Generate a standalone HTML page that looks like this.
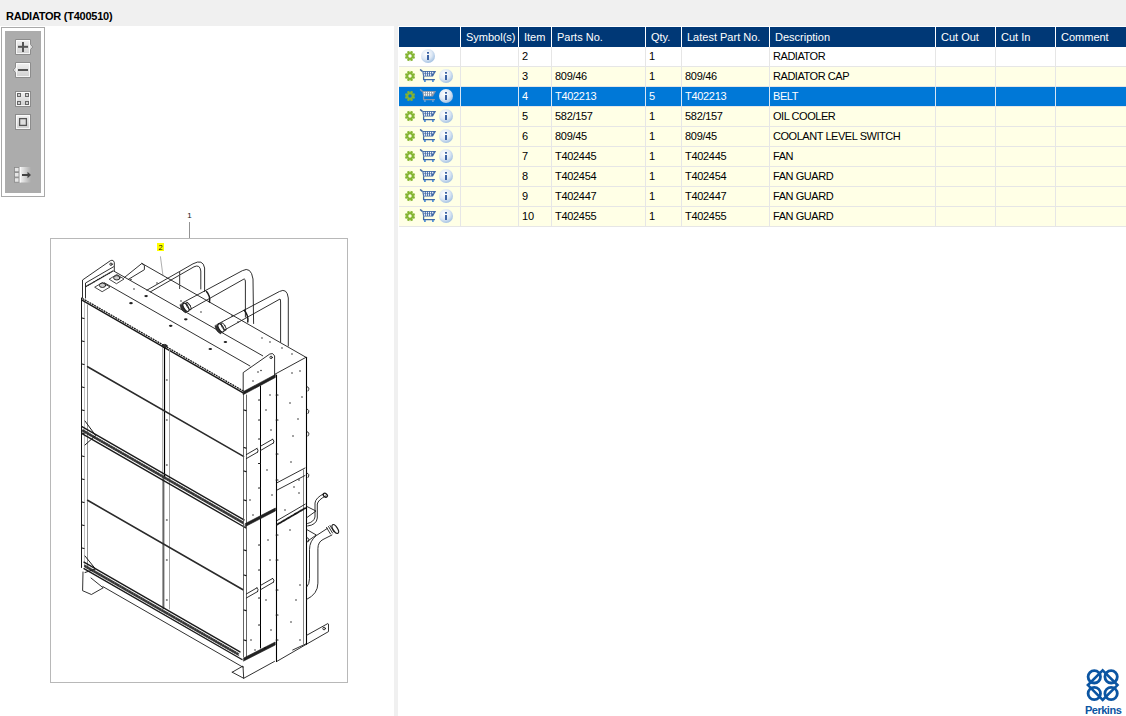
<!DOCTYPE html>
<html><head><meta charset="utf-8">
<style>
*{margin:0;padding:0;box-sizing:border-box}
html,body{width:1126px;height:716px;overflow:hidden;background:#fff;font-family:"Liberation Sans",sans-serif;position:relative}
.a{position:absolute}
#top{left:0;top:0;width:1126px;height:26px;background:#f0f0f0}
#title{left:6px;top:10px;font-weight:bold;font-size:11px;line-height:12px;color:#000;letter-spacing:-0.25px;white-space:nowrap}
#divider{left:394px;top:26px;width:4px;height:690px;background:#f0f0f0}
#tb{left:1px;top:27px;width:44px;height:170px;border:1px solid #a9a9a9;background:#fff}
#tbin{left:3px;top:3px;width:36px;height:162px;background:#acacac}
.hd{top:27px;height:20px;background:#003876;color:#fff;font-size:11px;white-space:nowrap;overflow:hidden}
.hd span{position:absolute;top:4px;line-height:13px}
.cell{font-size:11px;line-height:13px;white-space:nowrap}

</style></head><body>
<svg width="0" height="0" style="position:absolute">
<defs>
<radialGradient id="ig" cx="0.4" cy="0.35" r="0.7">
<stop offset="0" stop-color="#ffffff"/><stop offset="0.55" stop-color="#dfe9f5"/><stop offset="1" stop-color="#9dbde0"/>
</radialGradient>
<g id="gear">
<path fill="#83b431" fill-rule="evenodd" d="M6.34 2.32 L6.74 0.85 L9.12 1.84 L8.36 3.15 L8.85 3.64 L10.16 2.88 L11.15 5.26 L9.68 5.66 L9.68 6.34 L11.15 6.74 L10.16 9.12 L8.85 8.36 L8.36 8.85 L9.12 10.16 L6.74 11.15 L6.34 9.68 L5.66 9.68 L5.26 11.15 L2.88 10.16 L3.64 8.85 L3.15 8.36 L1.84 9.12 L0.85 6.74 L2.32 6.34 L2.32 5.66 L0.85 5.26 L1.84 2.88 L3.15 3.64 L3.64 3.15 L2.88 1.84 L5.26 0.85 L5.66 2.32 Z M6 4.3 A1.7 1.7 0 1 0 6 7.7 A1.7 1.7 0 1 0 6 4.3 Z"/>
</g>
<g id="info">
<circle cx="8" cy="8" r="7" fill="url(#ig)"/>
<rect x="7" y="4" width="2" height="1.7" fill="#3a62a4"/>
<rect x="7" y="7" width="2" height="5" fill="#3a62a4"/>
</g>
<g id="cart">
<path d="M1.1 0.5 L3.4 2.3" stroke="#4169a6" stroke-width="1.5" fill="none"/>
<path d="M3.2 2.0 L17.1 2.0 L14.0 7.6 L4.1 7.6 Z" fill="#4169a6"/>
<g fill="#eef3fa"><rect x="4.6" y="2.9" width="1.2" height="1.6"/><rect x="6.8" y="2.9" width="1.2" height="1.6"/><rect x="8.9" y="2.9" width="1.2" height="1.6"/><rect x="11" y="2.9" width="1.2" height="1.6"/><rect x="13.1" y="2.9" width="1.2" height="1.6"/>
<rect x="4.9" y="5.1" width="1.2" height="1.6"/><rect x="6.8" y="5.1" width="1.2" height="1.6"/><rect x="8.9" y="5.1" width="1.2" height="1.6"/><rect x="11" y="5.1" width="1.2" height="1.6"/></g>
<path d="M4.6 7.3 L4.6 10.6 L15.9 10.6" stroke="#4169a6" stroke-width="1.3" fill="none"/>
<rect x="5" y="11.2" width="1.8" height="1.6" fill="#2f7ad0"/><rect x="13" y="11.2" width="1.8" height="1.6" fill="#2f7ad0"/>
</g>
<g id="cartsel">
<path d="M1.1 0.5 L3.4 2.3" stroke="#8a96a8" stroke-width="1.5" fill="none"/>
<path d="M3.2 2.0 L17.1 2.0 L14.0 7.6 L4.1 7.6 Z" fill="#8a96a8"/>
<g fill="#ffffff"><rect x="4.6" y="2.9" width="1.2" height="1.6"/><rect x="6.8" y="2.9" width="1.2" height="1.6"/><rect x="8.9" y="2.9" width="1.2" height="1.6"/><rect x="11" y="2.9" width="1.2" height="1.6"/><rect x="13.1" y="2.9" width="1.2" height="1.6"/>
<rect x="4.9" y="5.1" width="1.2" height="1.6"/><rect x="6.8" y="5.1" width="1.2" height="1.6"/><rect x="8.9" y="5.1" width="1.2" height="1.6"/><rect x="11" y="5.1" width="1.2" height="1.6"/></g>
<path d="M4.6 7.3 L4.6 10.6 L15.9 10.6" stroke="#8a96a8" stroke-width="1.3" fill="none"/>
<rect x="5" y="11.2" width="1.8" height="1.6" fill="#6fa6dc"/><rect x="13" y="11.2" width="1.8" height="1.6" fill="#6fa6dc"/>
</g>
</defs>
</svg>
<div class="a" id="top"></div>
<div class="a" id="title">RADIATOR (T400510)</div>
<div class="a" id="divider"></div>
<div class="a" id="tb"><div class="a" id="tbin"></div></div>
<svg class="a" style="left:0;top:0" width="50" height="200">
<defs>
<linearGradient id="bg1" x1="0" y1="0" x2="0" y2="1"><stop offset="0" stop-color="#f2f2f2"/><stop offset="1" stop-color="#cfcfcf"/></linearGradient>
<linearGradient id="bg2" x1="0" y1="0" x2="1" y2="0"><stop offset="0" stop-color="#f4f4f4"/><stop offset="1" stop-color="#acacac"/></linearGradient>
</defs>
<g stroke="#8c8c8c" stroke-width="1" fill="url(#bg1)">
<path d="M15.5 39.5 H30.5 V44.5 L32.8 47 L30.5 49.5 V54.5 H15.5 Z"/>
<path d="M15.5 62.5 H30.5 V77.5 H15.5 V72.5 L13.2 70 L15.5 67.5 Z"/>
<rect x="15.5" y="91.5" width="15" height="15"/>
<rect x="15.5" y="114.5" width="15" height="15"/>
</g>
<g fill="none" stroke="#ffffff" stroke-width="1" opacity="0.8">
<rect x="16.5" y="40.5" width="13" height="13"/>
<rect x="16.5" y="63.5" width="13" height="13"/>
<rect x="16.5" y="92.5" width="13" height="13"/>
<rect x="16.5" y="115.5" width="13" height="13"/>
</g>
<g fill="#555">
<rect x="18" y="45.8" width="10" height="2"/><rect x="22" y="42" width="2" height="10"/>
<rect x="18" y="69" width="10" height="2"/>
</g>
<g fill="#cfcfcf" stroke="#666" stroke-width="1">
<rect x="17.5" y="93.5" width="3" height="3"/><rect x="25.5" y="93.5" width="3" height="3"/>
<rect x="17.5" y="101.5" width="3" height="3"/><rect x="25.5" y="101.5" width="3" height="3"/>
</g>
<rect x="19.6" y="118.6" width="6.8" height="6.8" fill="#dedede" stroke="#555" stroke-width="1.3"/>
<rect x="20" y="167" width="11" height="15.5" fill="url(#bg2)"/>
<g fill="#e6e6e6" stroke="#888" stroke-width="0.8">
<rect x="14.4" y="167.4" width="4.6" height="4.4"/><rect x="14.4" y="172.6" width="4.6" height="4.4"/><rect x="14.4" y="177.8" width="4.6" height="4.4"/>
</g>
<rect x="19.6" y="167" width="1" height="15.5" fill="#fff"/>
<rect x="22" y="174" width="6.5" height="2" fill="#444"/>
<path d="M27.5 171.8 L31 175 L27.5 178.2 Z" fill="#444"/>
</svg>
<div class="a hd" style="left:399px;width:61px"></div>
<div class="a hd" style="left:461px;width:57px"><span style="left:5px">Symbol(s)</span></div>
<div class="a hd" style="left:519px;width:32px"><span style="left:5px">Item</span></div>
<div class="a hd" style="left:552px;width:93px"><span style="left:5px">Parts No.</span></div>
<div class="a hd" style="left:646px;width:35px"><span style="left:5px">Qty.</span></div>
<div class="a hd" style="left:682px;width:87px"><span style="left:5px">Latest Part No.</span></div>
<div class="a hd" style="left:770px;width:165px"><span style="left:5px">Description</span></div>
<div class="a hd" style="left:936px;width:59px"><span style="left:5px">Cut Out</span></div>
<div class="a hd" style="left:996px;width:59px"><span style="left:5px">Cut In</span></div>
<div class="a hd" style="left:1056px;width:70px"><span style="left:5px">Comment</span></div>

<svg class="a" style="left:1080px;top:660.6px" width="46" height="56">
<g fill="none" stroke="#0b55a2" stroke-width="2.8">
<circle cx="14.3" cy="15.8" r="6.2"/><circle cx="31.1" cy="15.8" r="6.2"/>
<circle cx="14.3" cy="32.5" r="6.2"/><circle cx="31.1" cy="32.5" r="6.2"/>
<path d="M22.7 9.3 L37.5 24.1 L22.7 38.9 L7.9 24.1 Z" stroke-width="2.6"/>
</g>
</svg>
<div class="a" style="left:1085px;top:703.6px;font-size:11px;line-height:12px;font-weight:bold;color:#0b55a2;letter-spacing:-0.5px;white-space:nowrap">Perkins</div>
<div class="a" style="left:399px;top:47px;width:727px;height:19px;background:#fff"></div>
<div class="a" style="left:399px;top:66px;width:727px;height:1px;background:#e6e6e6"></div>
<div class="a cell" style="left:522px;top:50px;color:#000;letter-spacing:0">2</div>
<div class="a cell" style="left:649px;top:50px;color:#000;letter-spacing:0">1</div>
<div class="a cell" style="left:773px;top:50px;color:#000;letter-spacing:-0.45px">RADIATOR</div>
<svg class="a" style="left:404px;top:50px" width="12" height="12"><use href="#gear"/></svg>
<svg class="a" style="left:420px;top:48px" width="16" height="16"><use href="#info"/></svg>
<div class="a" style="left:399px;top:67px;width:727px;height:19px;background:#ffffe6"></div>
<div class="a" style="left:399px;top:86px;width:727px;height:1px;background:#e6e6e6"></div>
<div class="a cell" style="left:522px;top:70px;color:#000;letter-spacing:0">3</div>
<div class="a cell" style="left:555px;top:70px;color:#000;letter-spacing:-0.3px">809/46</div>
<div class="a cell" style="left:649px;top:70px;color:#000;letter-spacing:0">1</div>
<div class="a cell" style="left:685px;top:70px;color:#000;letter-spacing:-0.3px">809/46</div>
<div class="a cell" style="left:773px;top:70px;color:#000;letter-spacing:-0.45px">RADIATOR CAP</div>
<svg class="a" style="left:404px;top:70px" width="12" height="12"><use href="#gear"/></svg>
<svg class="a" style="left:419px;top:69px" width="18" height="15"><use href="#cart"/></svg>
<svg class="a" style="left:438px;top:68px" width="16" height="16"><use href="#info"/></svg>
<div class="a" style="left:399px;top:87px;width:727px;height:19px;background:#0078d7"></div>
<div class="a" style="left:399px;top:106px;width:727px;height:1px;background:#e6e6e6"></div>
<div class="a cell" style="left:522px;top:90px;color:#fff;letter-spacing:0">4</div>
<div class="a cell" style="left:555px;top:90px;color:#fff;letter-spacing:-0.3px">T402213</div>
<div class="a cell" style="left:649px;top:90px;color:#fff;letter-spacing:0">5</div>
<div class="a cell" style="left:685px;top:90px;color:#fff;letter-spacing:-0.3px">T402213</div>
<div class="a cell" style="left:773px;top:90px;color:#fff;letter-spacing:-0.45px">BELT</div>
<svg class="a" style="left:404px;top:90px" width="12" height="12"><use href="#gear"/></svg>
<svg class="a" style="left:419px;top:89px" width="18" height="15"><use href="#cartsel"/></svg>
<svg class="a" style="left:438px;top:88px" width="16" height="16"><use href="#info"/></svg>
<div class="a" style="left:399px;top:107px;width:727px;height:19px;background:#ffffe6"></div>
<div class="a" style="left:399px;top:126px;width:727px;height:1px;background:#e6e6e6"></div>
<div class="a cell" style="left:522px;top:110px;color:#000;letter-spacing:0">5</div>
<div class="a cell" style="left:555px;top:110px;color:#000;letter-spacing:-0.3px">582/157</div>
<div class="a cell" style="left:649px;top:110px;color:#000;letter-spacing:0">1</div>
<div class="a cell" style="left:685px;top:110px;color:#000;letter-spacing:-0.3px">582/157</div>
<div class="a cell" style="left:773px;top:110px;color:#000;letter-spacing:-0.45px">OIL COOLER</div>
<svg class="a" style="left:404px;top:110px" width="12" height="12"><use href="#gear"/></svg>
<svg class="a" style="left:419px;top:109px" width="18" height="15"><use href="#cart"/></svg>
<svg class="a" style="left:438px;top:108px" width="16" height="16"><use href="#info"/></svg>
<div class="a" style="left:399px;top:127px;width:727px;height:19px;background:#ffffe6"></div>
<div class="a" style="left:399px;top:146px;width:727px;height:1px;background:#e6e6e6"></div>
<div class="a cell" style="left:522px;top:130px;color:#000;letter-spacing:0">6</div>
<div class="a cell" style="left:555px;top:130px;color:#000;letter-spacing:-0.3px">809/45</div>
<div class="a cell" style="left:649px;top:130px;color:#000;letter-spacing:0">1</div>
<div class="a cell" style="left:685px;top:130px;color:#000;letter-spacing:-0.3px">809/45</div>
<div class="a cell" style="left:773px;top:130px;color:#000;letter-spacing:-0.45px">COOLANT LEVEL SWITCH</div>
<svg class="a" style="left:404px;top:130px" width="12" height="12"><use href="#gear"/></svg>
<svg class="a" style="left:419px;top:129px" width="18" height="15"><use href="#cart"/></svg>
<svg class="a" style="left:438px;top:128px" width="16" height="16"><use href="#info"/></svg>
<div class="a" style="left:399px;top:147px;width:727px;height:19px;background:#ffffe6"></div>
<div class="a" style="left:399px;top:166px;width:727px;height:1px;background:#e6e6e6"></div>
<div class="a cell" style="left:522px;top:150px;color:#000;letter-spacing:0">7</div>
<div class="a cell" style="left:555px;top:150px;color:#000;letter-spacing:-0.3px">T402445</div>
<div class="a cell" style="left:649px;top:150px;color:#000;letter-spacing:0">1</div>
<div class="a cell" style="left:685px;top:150px;color:#000;letter-spacing:-0.3px">T402445</div>
<div class="a cell" style="left:773px;top:150px;color:#000;letter-spacing:-0.45px">FAN</div>
<svg class="a" style="left:404px;top:150px" width="12" height="12"><use href="#gear"/></svg>
<svg class="a" style="left:419px;top:149px" width="18" height="15"><use href="#cart"/></svg>
<svg class="a" style="left:438px;top:148px" width="16" height="16"><use href="#info"/></svg>
<div class="a" style="left:399px;top:167px;width:727px;height:19px;background:#ffffe6"></div>
<div class="a" style="left:399px;top:186px;width:727px;height:1px;background:#e6e6e6"></div>
<div class="a cell" style="left:522px;top:170px;color:#000;letter-spacing:0">8</div>
<div class="a cell" style="left:555px;top:170px;color:#000;letter-spacing:-0.3px">T402454</div>
<div class="a cell" style="left:649px;top:170px;color:#000;letter-spacing:0">1</div>
<div class="a cell" style="left:685px;top:170px;color:#000;letter-spacing:-0.3px">T402454</div>
<div class="a cell" style="left:773px;top:170px;color:#000;letter-spacing:-0.45px">FAN GUARD</div>
<svg class="a" style="left:404px;top:170px" width="12" height="12"><use href="#gear"/></svg>
<svg class="a" style="left:419px;top:169px" width="18" height="15"><use href="#cart"/></svg>
<svg class="a" style="left:438px;top:168px" width="16" height="16"><use href="#info"/></svg>
<div class="a" style="left:399px;top:187px;width:727px;height:19px;background:#ffffe6"></div>
<div class="a" style="left:399px;top:206px;width:727px;height:1px;background:#e6e6e6"></div>
<div class="a cell" style="left:522px;top:190px;color:#000;letter-spacing:0">9</div>
<div class="a cell" style="left:555px;top:190px;color:#000;letter-spacing:-0.3px">T402447</div>
<div class="a cell" style="left:649px;top:190px;color:#000;letter-spacing:0">1</div>
<div class="a cell" style="left:685px;top:190px;color:#000;letter-spacing:-0.3px">T402447</div>
<div class="a cell" style="left:773px;top:190px;color:#000;letter-spacing:-0.45px">FAN GUARD</div>
<svg class="a" style="left:404px;top:190px" width="12" height="12"><use href="#gear"/></svg>
<svg class="a" style="left:419px;top:189px" width="18" height="15"><use href="#cart"/></svg>
<svg class="a" style="left:438px;top:188px" width="16" height="16"><use href="#info"/></svg>
<div class="a" style="left:399px;top:207px;width:727px;height:19px;background:#ffffe6"></div>
<div class="a" style="left:399px;top:226px;width:727px;height:1px;background:#e6e6e6"></div>
<div class="a cell" style="left:522px;top:210px;color:#000;letter-spacing:0">10</div>
<div class="a cell" style="left:555px;top:210px;color:#000;letter-spacing:-0.3px">T402455</div>
<div class="a cell" style="left:649px;top:210px;color:#000;letter-spacing:0">1</div>
<div class="a cell" style="left:685px;top:210px;color:#000;letter-spacing:-0.3px">T402455</div>
<div class="a cell" style="left:773px;top:210px;color:#000;letter-spacing:-0.45px">FAN GUARD</div>
<svg class="a" style="left:404px;top:210px" width="12" height="12"><use href="#gear"/></svg>
<svg class="a" style="left:419px;top:209px" width="18" height="15"><use href="#cart"/></svg>
<svg class="a" style="left:438px;top:208px" width="16" height="16"><use href="#info"/></svg>
<div class="a" style="left:460px;top:47px;width:1px;height:180px;background:#e6e6e6"></div>
<div class="a" style="left:460px;top:87px;width:1px;height:19px;background:#d6e6f5"></div>
<div class="a" style="left:518px;top:47px;width:1px;height:180px;background:#e6e6e6"></div>
<div class="a" style="left:518px;top:87px;width:1px;height:19px;background:#d6e6f5"></div>
<div class="a" style="left:551px;top:47px;width:1px;height:180px;background:#e6e6e6"></div>
<div class="a" style="left:551px;top:87px;width:1px;height:19px;background:#d6e6f5"></div>
<div class="a" style="left:645px;top:47px;width:1px;height:180px;background:#e6e6e6"></div>
<div class="a" style="left:645px;top:87px;width:1px;height:19px;background:#d6e6f5"></div>
<div class="a" style="left:681px;top:47px;width:1px;height:180px;background:#e6e6e6"></div>
<div class="a" style="left:681px;top:87px;width:1px;height:19px;background:#d6e6f5"></div>
<div class="a" style="left:769px;top:47px;width:1px;height:180px;background:#e6e6e6"></div>
<div class="a" style="left:769px;top:87px;width:1px;height:19px;background:#d6e6f5"></div>
<div class="a" style="left:935px;top:47px;width:1px;height:180px;background:#e6e6e6"></div>
<div class="a" style="left:935px;top:87px;width:1px;height:19px;background:#d6e6f5"></div>
<div class="a" style="left:995px;top:47px;width:1px;height:180px;background:#e6e6e6"></div>
<div class="a" style="left:995px;top:87px;width:1px;height:19px;background:#d6e6f5"></div>
<div class="a" style="left:1055px;top:47px;width:1px;height:180px;background:#e6e6e6"></div>
<div class="a" style="left:1055px;top:87px;width:1px;height:19px;background:#d6e6f5"></div>
<svg class="a" style="left:0;top:0" width="394" height="716" font-family="Liberation Sans, sans-serif">
<rect x="50.5" y="238.5" width="297" height="444" fill="none" stroke="#b8b8b8" stroke-width="1"/>
<line x1="189.5" y1="222" x2="189.5" y2="238" stroke="#777" stroke-width="0.8"/>
<text x="187.3" y="218.3" font-size="8" fill="#111">1</text>
<rect x="157" y="243" width="7" height="8" fill="#ffff00"/>
<text x="158.4" y="250" font-size="7.5" fill="#111">2</text>
<line x1="160.4" y1="256.3" x2="162.9" y2="275.1" stroke="#777" stroke-width="0.6"/>
<g fill="none" stroke="#1a1a1a" stroke-width="0.9" stroke-linecap="round" stroke-linejoin="round">
<path d="M82.5 298 L82.5 280 L110.5 260.6 Q113.5 259.5 114.3 262.5 L114.3 270.8"/>
<path d="M85.5 298 L85.5 283 L113.5 266.8"/>
<path d="M86 286.5 L113 271" stroke-dasharray="1 1.2" stroke-width="1.3"/>
<circle cx="111" cy="264.2" r="1.2"/>
<line x1="81.5" y1="298.0" x2="81.5" y2="567.5" stroke-width="1.0"/>
<line x1="84.5" y1="300.0" x2="84.5" y2="567.0" stroke-width="0.6" stroke="#999"/>
<line x1="87.5" y1="305.0" x2="87.5" y2="568.0" stroke="#888"/>
<line x1="82.0" y1="318.0" x2="84.0" y2="318.5" stroke-width="1.2"/>
<line x1="82.0" y1="341.0" x2="84.0" y2="341.5" stroke-width="1.2"/>
<line x1="82.0" y1="364.0" x2="84.0" y2="364.5" stroke-width="1.2"/>
<line x1="82.0" y1="387.0" x2="84.0" y2="387.5" stroke-width="1.2"/>
<line x1="82.0" y1="410.0" x2="84.0" y2="410.5" stroke-width="1.2"/>
<line x1="82.0" y1="433.0" x2="84.0" y2="433.5" stroke-width="1.2"/>
<line x1="82.0" y1="456.0" x2="84.0" y2="456.5" stroke-width="1.2"/>
<line x1="82.0" y1="479.0" x2="84.0" y2="479.5" stroke-width="1.2"/>
<line x1="82.0" y1="502.0" x2="84.0" y2="502.5" stroke-width="1.2"/>
<line x1="82.0" y1="525.0" x2="84.0" y2="525.5" stroke-width="1.2"/>
<line x1="82.0" y1="548.0" x2="84.0" y2="548.5" stroke-width="1.2"/>
<line x1="114.2" y1="271.3" x2="262.7" y2="355.8"/>
<line x1="104.2" y1="282.7" x2="250.0" y2="366.0"/>
<line x1="141.9" y1="263.4" x2="306.0" y2="357.3"/>
<path d="M124.3 277.6 L141.9 263.4 L144.4 265.5 L144.4 269.7 L128.5 279.3"/>
<path d="M95 287 L102.5 282.5 L110 287 L102.5 291.5 Z" stroke-width="0.8"/>
<path d="M109.5 279 L116.8 274.5 L124 279 L116.8 283.5 Z" stroke-width="0.8"/>
<ellipse cx="102.5" cy="285.3" rx="3.2" ry="2.2" fill="#ccc"/>
<ellipse cx="116.8" cy="277.8" rx="3.2" ry="2.2" fill="#ccc"/>
<circle cx="131" cy="279.5" r="0.65" fill="#000" stroke="none"/>
<circle cx="157" cy="283" r="0.65" fill="#000" stroke="none"/>
<circle cx="134" cy="289" r="0.65" fill="#000" stroke="none"/>
<circle cx="181" cy="301" r="0.65" fill="#000" stroke="none"/>
<circle cx="188" cy="304" r="0.65" fill="#000" stroke="none"/>
<circle cx="201" cy="312" r="0.65" fill="#000" stroke="none"/>
<circle cx="232" cy="316" r="0.65" fill="#000" stroke="none"/>
<circle cx="238" cy="322" r="0.65" fill="#000" stroke="none"/>
<circle cx="270" cy="342" r="0.65" fill="#000" stroke="none"/>
<circle cx="282" cy="348" r="0.65" fill="#000" stroke="none"/>
<circle cx="292" cy="354" r="0.65" fill="#000" stroke="none"/>
<circle cx="262" cy="338" r="0.65" fill="#000" stroke="none"/>
<line x1="82.0" y1="300.1" x2="244.0" y2="393.3" stroke-width="1.5"/>
<line x1="83.0" y1="298.8" x2="243.0" y2="390.8" stroke-width="1.3" stroke-dasharray="0.9 1.8"/>
<line x1="162.5" y1="347.0" x2="162.5" y2="608.5" stroke="#aaa"/>
<line x1="164.5" y1="346.0" x2="164.5" y2="478.0" stroke-width="1.2" stroke="#000"/>
<line x1="163.6" y1="478.0" x2="163.6" y2="608.5" stroke-width="1.6" stroke="#666"/>
<line x1="169.5" y1="350.0" x2="169.5" y2="609.0" stroke="#999"/>
<ellipse cx="164.6" cy="346" rx="2.5" ry="1.6" fill="#333"/>
<line x1="166.3" y1="380.0" x2="167.3" y2="380.0" stroke-width="1"/>
<line x1="166.3" y1="420.0" x2="167.3" y2="420.0" stroke-width="1"/>
<line x1="166.3" y1="465.0" x2="167.3" y2="465.0" stroke-width="1"/>
<line x1="166.3" y1="520.0" x2="167.3" y2="520.0" stroke-width="1"/>
<line x1="166.3" y1="560.0" x2="167.3" y2="560.0" stroke-width="1"/>
<line x1="166.3" y1="600.0" x2="167.3" y2="600.0" stroke-width="1"/>
<line x1="82.0" y1="426.7" x2="244.0" y2="519.9" stroke-width="1.4"/>
<line x1="83.0" y1="429.6" x2="243.0" y2="521.6" stroke-width="0.7" stroke="#333"/>
<line x1="83.0" y1="431.8" x2="243.0" y2="523.8" stroke-width="0.7" stroke="#333"/>
<line x1="83.0" y1="430.7" x2="243.0" y2="522.7" stroke-width="2.2" stroke="#333" stroke-dasharray="0.7 2.0"/>
<line x1="82.0" y1="433.7" x2="246.0" y2="528.0" stroke-width="1.4"/>
<path d="M85 421 L95.6 435.5 L85 445" stroke-width="1"/>
<line x1="84.0" y1="562.2" x2="240.0" y2="651.9" stroke-width="1.4"/>
<line x1="85.0" y1="565.0" x2="239.0" y2="653.6" stroke-width="0.7" stroke="#333"/>
<line x1="85.0" y1="567.2" x2="239.0" y2="655.8" stroke-width="0.7" stroke="#333"/>
<line x1="85.0" y1="566.1" x2="239.0" y2="654.7" stroke-width="2.2" stroke="#333" stroke-dasharray="0.7 2.0"/>
<line x1="84.0" y1="568.7" x2="242.0" y2="659.5" stroke-width="1.4"/>
<path d="M85 556 L95.5 569 L85 572.5" stroke-width="1"/>
<path d="M83 572 L82.6 590.7 L91.4 594.5 L102.9 588"/>
<line x1="102.9" y1="586.6" x2="243.0" y2="667.2"/>
<line x1="91.0" y1="578.0" x2="102.9" y2="587.6"/>
<path d="M232.2 672.2 L243 666 L243.7 678.3 L274.5 661.4"/>
<line x1="232.2" y1="672.2" x2="243.7" y2="678.3"/>
<line x1="276.8" y1="661.4" x2="306.5" y2="644.2"/>
<line x1="292.7" y1="650.0" x2="306.5" y2="643.6"/>
<line x1="87.6" y1="366.7" x2="243.5" y2="456.4" stroke-width="1.6" stroke="#2a2a2a"/>
<line x1="87.6" y1="500.3" x2="243.0" y2="589.7" stroke-width="1.6" stroke="#2a2a2a"/>
<line x1="243.5" y1="392.0" x2="243.5" y2="657.0" stroke="#555"/>
<line x1="246.5" y1="395.0" x2="246.5" y2="657.0" stroke="#555"/>
<line x1="244.0" y1="410.0" x2="246.0" y2="410.6" stroke-width="1.2"/>
<line x1="244.0" y1="447.5" x2="246.0" y2="448.1" stroke-width="1.2"/>
<line x1="244.0" y1="471.0" x2="246.0" y2="471.6" stroke-width="1.2"/>
<line x1="244.0" y1="500.0" x2="246.0" y2="500.6" stroke-width="1.2"/>
<line x1="244.0" y1="550.0" x2="246.0" y2="550.6" stroke-width="1.2"/>
<line x1="244.0" y1="575.0" x2="246.0" y2="575.6" stroke-width="1.2"/>
<line x1="244.0" y1="610.0" x2="246.0" y2="610.6" stroke-width="1.2"/>
<line x1="244.0" y1="640.0" x2="246.0" y2="640.6" stroke-width="1.2"/>
<line x1="260.5" y1="386.0" x2="260.5" y2="648.0" stroke-width="1.0" stroke="#000"/>
<line x1="258.5" y1="400.0" x2="260.4" y2="400.0" stroke-width="1.1"/>
<line x1="258.5" y1="420.0" x2="260.4" y2="420.0" stroke-width="1.1"/>
<line x1="258.5" y1="439.0" x2="260.4" y2="439.0" stroke-width="1.1"/>
<line x1="258.5" y1="463.5" x2="260.4" y2="463.5" stroke-width="1.1"/>
<line x1="258.5" y1="488.0" x2="260.4" y2="488.0" stroke-width="1.1"/>
<line x1="258.5" y1="545.0" x2="260.4" y2="545.0" stroke-width="1.1"/>
<line x1="258.5" y1="570.0" x2="260.4" y2="570.0" stroke-width="1.1"/>
<line x1="258.5" y1="598.0" x2="260.4" y2="598.0" stroke-width="1.1"/>
<line x1="258.5" y1="625.0" x2="260.4" y2="625.0" stroke-width="1.1"/>
<line x1="276.5" y1="375.0" x2="276.5" y2="661.5" stroke-width="1.1" stroke="#000"/>
<line x1="276.1" y1="395.0" x2="278.0" y2="395.0" stroke-width="1.1"/>
<line x1="276.1" y1="420.0" x2="278.0" y2="420.0" stroke-width="1.1"/>
<line x1="276.1" y1="454.0" x2="278.0" y2="454.0" stroke-width="1.1"/>
<line x1="276.1" y1="480.0" x2="278.0" y2="480.0" stroke-width="1.1"/>
<line x1="276.1" y1="535.0" x2="278.0" y2="535.0" stroke-width="1.1"/>
<line x1="276.1" y1="560.0" x2="278.0" y2="560.0" stroke-width="1.1"/>
<line x1="276.1" y1="590.0" x2="278.0" y2="590.0" stroke-width="1.1"/>
<line x1="276.1" y1="615.0" x2="278.0" y2="615.0" stroke-width="1.1"/>
<line x1="276.1" y1="640.0" x2="278.0" y2="640.0" stroke-width="1.1"/>
<line x1="306.5" y1="357.5" x2="306.5" y2="644.2" stroke-width="1.1" stroke="#000"/>
<line x1="303.5" y1="470.0" x2="303.5" y2="644.2" stroke="#777"/>
<path d="M243.5 391.5 L275.3 374.5 L275.3 377.5 L243.5 394.5 Z" fill="#222" stroke-width="0.6"/>
<line x1="275.3" y1="374.0" x2="306.0" y2="357.3"/>
<path d="M245.4 523.5 L275.4 508 L275.4 511 L245.4 526.5 Z" fill="#222" stroke-width="0.6"/>
<path d="M243.7 658 L275.2 642 L275.2 645 L243.7 661 Z" fill="#222" stroke-width="0.6"/>
<line x1="277.2" y1="524.5" x2="305.3" y2="508.1" stroke-width="1.8" stroke-dasharray="1 0.8"/>
<line x1="277.2" y1="520.5" x2="305.3" y2="504.1"/>
<path d="M277.2 482.7 L305 468 M277.2 490 L305 475.5"/>
<path d="M243.2 390.8 L243.2 372.6 L269.8 354 Q273 352.2 274.6 355.9 L274.6 375.4"/>
<circle cx="271.1" cy="357.4" r="1.2"/>
<circle cx="258" cy="372" r="0.7" fill="#000" stroke="none"/>
<circle cx="261" cy="370.5" r="0.7" fill="#000" stroke="none"/>
<circle cx="253" cy="381" r="0.7" fill="#000" stroke="none"/>
<path d="M246.3 454.6 L257 448.4 M246.3 458.6 L257.7 452.1 M257 448.4 Q259 450 257.7 452.1"/>
<path d="M260.4 446.3 L272.7 439.2 M260.4 450.6 L273.6 442.9 M272.7 439.2 Q275 441 273.6 442.9"/>
<path d="M246.3 594 L257 587.8 M246.3 598 L257.7 591.5 M257 587.8 Q259 589.5 257.7 591.5"/>
<path d="M260.4 585.5 L272.7 578.4 M260.4 589.8 L273.6 582.1 M272.7 578.4 Q275 580 273.6 582.1"/>
<path d="M306.7 386.5 Q310.5 387.5 308 391" stroke-width="0.9"/>
<path d="M306.7 409.0 Q310.5 410.0 308 413.5" stroke-width="0.9"/>
<path d="M306.7 431.5 Q310.5 432.5 308 436" stroke-width="0.9"/>
<path d="M306.7 473.0 Q310.5 474.0 308 477.5" stroke-width="0.9"/>
<path d="M306.7 537.5 Q310.5 538.5 308 542" stroke-width="0.9"/>
<circle cx="300" cy="371" r="0.7" fill="#000" stroke="none"/>
<circle cx="292" cy="373" r="0.7" fill="#000" stroke="none"/>
<circle cx="302" cy="397" r="0.7" fill="#000" stroke="none"/>
<circle cx="290" cy="403" r="0.7" fill="#000" stroke="none"/>
<circle cx="298" cy="419" r="0.7" fill="#000" stroke="none"/>
<circle cx="293" cy="436" r="0.7" fill="#000" stroke="none"/>
<circle cx="291" cy="462" r="0.7" fill="#000" stroke="none"/>
<circle cx="299" cy="480" r="0.7" fill="#000" stroke="none"/>
<circle cx="294" cy="487" r="0.7" fill="#000" stroke="none"/>
<circle cx="299" cy="493" r="0.7" fill="#000" stroke="none"/>
<circle cx="295" cy="514" r="0.7" fill="#000" stroke="none"/>
<circle cx="300" cy="585" r="0.7" fill="#000" stroke="none"/>
<circle cx="296" cy="600" r="0.7" fill="#000" stroke="none"/>
<circle cx="291" cy="622" r="0.7" fill="#000" stroke="none"/>
<circle cx="300" cy="640" r="0.7" fill="#000" stroke="none"/>
<circle cx="285" cy="510" r="0.7" fill="#000" stroke="none"/>
<circle cx="290" cy="530" r="0.7" fill="#000" stroke="none"/>
<circle cx="270" cy="395" r="0.7" fill="#000" stroke="none"/>
<circle cx="266" cy="410" r="0.7" fill="#000" stroke="none"/>
<circle cx="271" cy="430" r="0.7" fill="#000" stroke="none"/>
<circle cx="267" cy="470" r="0.7" fill="#000" stroke="none"/>
<circle cx="272" cy="495" r="0.7" fill="#000" stroke="none"/>
<circle cx="268" cy="540" r="0.7" fill="#000" stroke="none"/>
<circle cx="270" cy="560" r="0.7" fill="#000" stroke="none"/>
<circle cx="266" cy="600" r="0.7" fill="#000" stroke="none"/>
<circle cx="271" cy="630" r="0.7" fill="#000" stroke="none"/>
<circle cx="265" cy="648" r="0.7" fill="#000" stroke="none"/>
<circle cx="250" cy="500" r="0.7" fill="#000" stroke="none"/>
<circle cx="253" cy="515" r="0.7" fill="#000" stroke="none"/>
<circle cx="251" cy="640" r="0.7" fill="#000" stroke="none"/>
<circle cx="255" cy="650" r="0.7" fill="#000" stroke="none"/>
<path d="M146.9 290.2 L193 263.8 Q203 258.5 204.6 268 L204.6 291.5"/>
<path d="M150.3 291.9 L194 266.8 Q200 264 200.8 271 L200.8 289"/>
<line x1="179.6" y1="271.8" x2="179.6" y2="288.5" stroke-width="1.2" stroke="#555"/>
<path d="M182.6 302.8 L242.3 270.7 Q251 266 253 279 L253.6 323.5"/>
<path d="M186.3 311.6 L244.2 278.9 Q245.4 279 245.4 282 L245.4 317"/>
<path d="M180 305 Q181 311 186 313 L184 303 Z" fill="#333" stroke-width="0.6"/>
<ellipse cx="186" cy="307.3" rx="2.2" ry="4.6" transform="rotate(-30 186 307.3)" fill="#fff" stroke-width="1.1"/>
<ellipse cx="188.6" cy="306" rx="1.6" ry="4.4" transform="rotate(-30 188.6 306)" stroke-width="0.8"/>
<path d="M206.5 291.5 Q210.5 296 209.5 302" stroke-width="1.5"/>
<path d="M217.8 324.1 L279.4 291.5 Q287 287.5 288.3 298 L288.3 346"/>
<path d="M221.5 331.7 L280 299 Q280.6 299 280.6 303 L280.6 342"/>
<path d="M215 326 Q216 332 221 334 L219 324 Z" fill="#333" stroke-width="0.6"/>
<ellipse cx="221" cy="327.9" rx="2.2" ry="4.6" transform="rotate(-30 221 327.9)" fill="#fff" stroke-width="1.1"/>
<ellipse cx="223.6" cy="326.6" rx="1.6" ry="4.4" transform="rotate(-30 223.6 326.6)" stroke-width="0.8"/>
<path d="M244.2 310.3 Q248.5 315 247.8 322" stroke-width="1.5"/>
<path d="M307.6 523.5 Q314 522 315 517 L315 503 Q315.5 498 323.5 493.8"/>
<path d="M307.6 526 Q316.5 525 317.3 518 L317.3 504 Q318 500 325.5 496"/>
<ellipse cx="325.3" cy="495.2" rx="1.7" ry="2.3" transform="rotate(-50 325.3 495.2)" stroke-width="1.3"/>
<path d="M306.7 506.4 L316 511 L306.7 517.7"/>
<path d="M306.7 587.1 Q309.5 584 309.5 578.7 L309.5 549.6 Q309.5 541 316.3 535.6 L327.4 528.4"/>
<path d="M306.7 599.4 Q317.9 594 317.9 583.2 L317.9 548.5 Q318 542 323 539.5 L331.9 535"/>
<path d="M306.7 529.5 L316.3 535 L306.7 541.8"/>
<ellipse cx="335.3" cy="529" rx="2.2" ry="5" transform="rotate(-32 335.3 529)" fill="#fff" stroke-width="1.1"/>
<path d="M326.5 527.5 L330.5 534 M328.5 526.5 L332.5 533 M330 525.5 L334 532" stroke-width="0.9"/>
<path d="M306.5 635.4 L327.9 623.5 L328.5 624.1 L328.5 631.6 L306.5 644.2"/>
<circle cx="324.1" cy="628.5" r="1.3"/>
</g>
<g fill="#222">
<ellipse cx="131" cy="303.2" rx="1.8" ry="1.1"/>
<ellipse cx="146.1" cy="296.1" rx="1.8" ry="1.1"/>
<ellipse cx="170.7" cy="325.8" rx="1.8" ry="1.1"/>
<ellipse cx="185.8" cy="319.3" rx="1.8" ry="1.1"/>
<ellipse cx="210.3" cy="349" rx="1.8" ry="1.1"/>
<ellipse cx="225.4" cy="342" rx="1.8" ry="1.1"/>
</g>
</svg>
</body></html>
